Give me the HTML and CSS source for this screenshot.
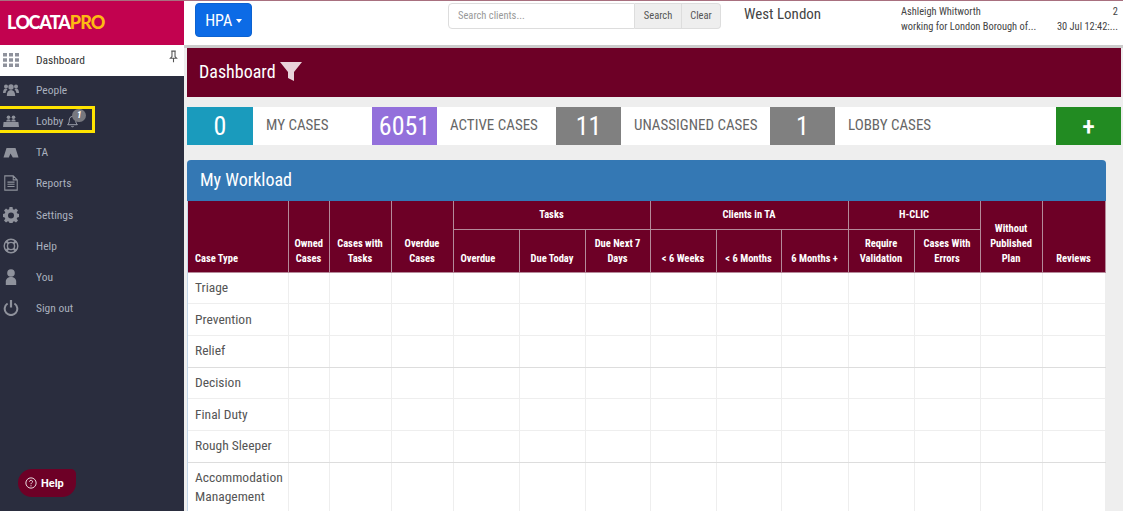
FILE: index.html
```html
<!DOCTYPE html>
<html lang="en">
<head>
<meta charset="utf-8">
<title>Locata Pro Dashboard</title>
<link rel="stylesheet" href="styles.css">
</head>
<body>
<aside class="sidebar">
  <div class="logo"><span class="logo-w">L<span class="logo-o">O</span>CATA</span><span class="logo-y">PRO</span></div>
  <nav class="nav">
    <a class="nav-item active">
      <svg class="ico" viewBox="0 0 16 14"><path d="M0 0h4v3.600H0zM6 0h4v3.600H6zM12 0h4v3.600h-4zM0 5.200h4v3.600H0zM6 5.200h4v3.600H6zM12 5.200h4v3.600h-4zM0 10.400h4V14H0zM6 10.400h4V14H6zM12 10.400h4V14h-4z"/></svg>
      <span>Dashboard</span>
      <svg class="pin" viewBox="0 0 10 14"><path d="M2.500 1h5M3.300 1v6L1.500 9h7L6.700 7V1M5 9v4.500" fill="none" stroke="currentColor" stroke-width="1.200"/></svg>
    </a>
    <a class="nav-item">
      <svg class="ico" viewBox="0 0 16 14"><circle cx="8" cy="4" r="2.700"/><circle cx="3" cy="3.600" r="2"/><circle cx="13" cy="3.600" r="2"/><path d="M3.800 13c0-4 1.500-6 4.200-6s4.200 2 4.200 6zM0 10c0-2.500 1-4.500 3-4.500l1.500.7C3.300 7.500 2.800 8.500 2.600 10zM16 10c0-2.500-1-4.500-3-4.500l-1.500.7c1.200 1.300 1.700 2.300 1.900 3.800z"/></svg>
      <span>People</span>
    </a>
    <a class="nav-item">
      <svg class="ico" viewBox="0 0 16 14"><circle cx="5.500" cy="3.200" r="1.800"/><circle cx="10.500" cy="3.200" r="1.800"/><path d="M3.300 7.500c0-1.500.9-2.300 2.200-2.300s2.200.8 2.200 2.300zM8.300 7.500c0-1.500.9-2.300 2.200-2.300s2.200.8 2.200 2.300zM.6 8h14.800l.6 5H0z"/></svg>
      <span>Lobby</span>
      <span class="bell-wrap">
        <svg class="bell" viewBox="0 0 12 14"><path d="M6 1.500c-2.300 0-3.500 1.700-3.500 4 0 2.500-.7 3.800-1.800 5h10.600c-1.100-1.200-1.800-2.500-1.800-5 0-2.300-1.200-4-3.500-4zM4.700 12c.2 1 2.400 1 2.600 0" fill="none" stroke="currentColor"/></svg>
        <span class="badge">1</span>
      </span>
    </a>
    <a class="nav-item">
      <svg class="ico" viewBox="0 0 16 14"><path d="M3.500 3h9L15.500 12.500H9.800L7.500 8.500 5.800 12.500H.5z"/></svg>
      <span>TA</span>
    </a>
    <a class="nav-item">
      <svg class="ico ico-tall" viewBox="0 0 16 18"><path d="M1 1h9.500L15 5.500V17H1zM10.500 1v4.500H15M4 8h8M4 10.500h8M4 13h8" fill="none" stroke="currentColor" stroke-width="1.200"/></svg>
      <span>Reports</span>
    </a>
    <a class="nav-item">
      <svg class="ico ico-tall" viewBox="0 0 16 16"><path fill-rule="evenodd" d="M6.500 0h3l.4 2.200 1.300.6L13 1.500l2 2-1.300 1.800.6 1.300 2.200.4v3l-2.200.4-.6 1.300 1.300 1.800-2 2-1.800-1.300-1.300.6-.4 2.200h-3l-.4-2.200-1.300-.6L3 15.500l-2-2 1.300-1.800-.6-1.300L-.5 10V7l2.200-.4.600-1.300L1 3.500l2-2 1.800 1.300 1.300-.6zM8 5.500a3 3 0 1 0 0 6 3 3 0 0 0 0-6z"/></svg>
      <span>Settings</span>
    </a>
    <a class="nav-item">
      <svg class="ico ico-tall" viewBox="0 0 16 16"><circle cx="8" cy="8" r="6.800" fill="none" stroke="currentColor" stroke-width="1.400"/><circle cx="8" cy="8" r="3.600" fill="none" stroke="currentColor" stroke-width="1.400"/><path d="M3 3l2.500 2.500M13 3l-2.500 2.500M3 13l2.500-2.500M13 13l-2.500-2.500" stroke="currentColor" stroke-width="2.400"/></svg>
      <span>Help</span>
    </a>
    <a class="nav-item">
      <svg class="ico ico-tall" viewBox="0 0 16 16"><circle cx="8" cy="4" r="3.800"/><path d="M2.800 16v-3.500C2.800 9.800 5 8 8 8s5.200 1.800 5.200 4.500V16z"/></svg>
      <span>You</span>
    </a>
    <a class="nav-item">
      <svg class="ico ico-tall" viewBox="0 0 16 16"><path d="M4.600 3.500a6.300 6.300 0 1 0 6.800 0" fill="none" stroke="currentColor" stroke-width="2"/><path d="M8 0v7.500" stroke="currentColor" stroke-width="2.200"/></svg>
      <span>Sign out</span>
    </a>
  </nav>
  <div class="lobby-box"></div>
  <button class="help-btn">
    <svg class="help-ico" viewBox="0 0 14 14"><circle cx="7" cy="7" r="6" fill="none" stroke="currentColor"/><path d="M5.200 5.500C5.300 3.300 8.800 3.400 8.800 5.400c0 1.400-1.800 1.400-1.800 3" fill="none" stroke="currentColor"/><circle cx="7" cy="10.300" r=".7" fill="currentColor"/></svg>
    Help
  </button>
</aside>
<div class="main">
  <header class="topbar">
    <button class="hpa">HPA <span class="caret"></span></button>
    <div class="search">
      <div class="search-input">Search clients...</div>
      <div class="search-btn">Search</div>
      <div class="search-btn last">Clear</div>
    </div>
    <div class="region">West London</div>
    <div class="user">
      <div class="user-row"><span>Ashleigh Whitworth</span><span>2</span></div>
      <div class="user-row"><span>working for London Borough of...</span><span>30 Jul 12:42:...</span></div>
    </div>
  </header>
  <div class="content">
    <div class="title-bar">
      <span>Dashboard</span>
      <svg class="funnel" viewBox="0 0 22 19"><path d="M0 0h22l-8 10v9l-6-3v-6z"/></svg>
    </div>
    <div class="stats">
      <div class="num teal">0</div><div class="label l1">MY CASES</div>
      <div class="num purple">6051</div><div class="label l2">ACTIVE CASES</div>
      <div class="num grey">11</div><div class="label l3">UNASSIGNED CASES</div>
      <div class="num grey">1</div><div class="label l4">LOBBY CASES</div>
      <div class="num green">+</div>
    </div>
    <section class="panel">
      <h2 class="panel-head">My Workload</h2>
      <table class="grid">
        <colgroup>
          <col class="c100"><col class="c41"><col class="c62"><col class="c62"><col class="c66"><col class="c66"><col class="c65"><col class="c66"><col class="c65"><col class="c67"><col class="c66"><col class="c66"><col class="c62"><col class="c63">
        </colgroup>
        <thead>
          <tr class="r1">
            <th rowspan="2" class="left">Case Type</th>
            <th rowspan="2">Owned Cases</th>
            <th rowspan="2">Cases with Tasks</th>
            <th rowspan="2">Overdue Cases</th>
            <th colspan="3" class="mid">Tasks</th>
            <th colspan="3" class="mid">Clients in TA</th>
            <th colspan="2" class="mid">H-CLIC</th>
            <th rowspan="2">Without Published Plan</th>
            <th rowspan="2">Reviews</th>
          </tr>
          <tr class="r2">
            <th class="left">Overdue</th><th>Due Today</th><th>Due Next 7 Days</th>
            <th>&lt; 6 Weeks</th><th>&lt; 6 Months</th><th>6 Months +</th>
            <th>Require Validation</th><th>Cases With Errors</th>
          </tr>
        </thead>
        <tbody>
          <tr><td>Triage</td><td></td><td></td><td></td><td></td><td></td><td></td><td></td><td></td><td></td><td></td><td></td><td></td><td></td></tr>
          <tr><td>Prevention</td><td></td><td></td><td></td><td></td><td></td><td></td><td></td><td></td><td></td><td></td><td></td><td></td><td></td></tr>
          <tr class="strong"><td>Relief</td><td></td><td></td><td></td><td></td><td></td><td></td><td></td><td></td><td></td><td></td><td></td><td></td><td></td></tr>
          <tr><td>Decision</td><td></td><td></td><td></td><td></td><td></td><td></td><td></td><td></td><td></td><td></td><td></td><td></td><td></td></tr>
          <tr><td>Final Duty</td><td></td><td></td><td></td><td></td><td></td><td></td><td></td><td></td><td></td><td></td><td></td><td></td><td></td></tr>
          <tr class="strong"><td>Rough Sleeper</td><td></td><td></td><td></td><td></td><td></td><td></td><td></td><td></td><td></td><td></td><td></td><td></td><td></td></tr>
          <tr class="tall"><td>Accommodation Management</td><td></td><td></td><td></td><td></td><td></td><td></td><td></td><td></td><td></td><td></td><td></td><td></td><td></td></tr>
        </tbody>
      </table>
    </section>
  </div>
</div>
</body>
</html>
```

FILE: styles.css
```css
* { box-sizing: border-box; }
html, body { height: 100%; margin: 0; }
body {
  display: flex;
  width: 1123px;
  height: 511px;
  overflow: hidden;
  font-family: Roboto, "Liberation Sans", sans-serif;
  font-stretch: 85%;
  color: #555;
  background: #eee;
  border-top: 1px solid #a8707f;
}
.sidebar {
  position: relative;
  flex: 0 0 184px;
  background: #2a2d3e;
  color: #a9adb8;
}
.logo {
  height: 44px;
  background: #c2024f;
  padding-left: 7px;
  font-family: Lato, sans-serif;
  font-weight: 900;
  font-size: 18px;
  line-height: 43px;
  letter-spacing: -1px;
}
.logo-w { color: #fff; }
.logo-o { letter-spacing: -1.600px; }
.logo-y { color: #fdb913; }
.nav-item {
  display: flex;
  align-items: center;
  height: 31.250px;
  padding: 0 0 4px 3px;
  font-size: 11.500px;
  color: #a9b0bd;
  white-space: nowrap;
}
.nav-item.active { background: #fff; color: #333; height: 31px; padding-bottom: 2px; }
.ico { width: 16px; height: 14px; margin-right: 17px; fill: #8f929c; color: #8f929c; flex: none; }
.ico-tall { height: 16px; }
.pin { width: 9px; height: 13px; margin-left: auto; margin-right: 6px; margin-top: -6px; color: #555; }
.bell-wrap { position: relative; display: block; width: 16px; height: 14px; margin-left: 2px; }
.bell { width: 11px; height: 13px; display: block; color: #a9adb8; margin-left: 2px; margin-top: 1px; }
.badge {
  position: absolute;
  left: 7px;
  top: -5px;
  width: 14px;
  height: 13px;
  border-radius: 7px;
  background: #77787f;
  color: #fff;
  font-size: 9px;
  font-weight: 700;
  font-style: italic;
  line-height: 13px;
  text-align: center;
}
.lobby-box {
  position: absolute;
  left: -3px;
  top: 105px;
  width: 98px;
  height: 27px;
  border: 3px solid #ffe400;
}
.help-btn {
  position: absolute;
  left: 18px;
  top: 468px;
  display: flex;
  align-items: center;
  gap: 4px;
  width: 58px;
  height: 28px;
  padding: 0 0 0 7px;
  border: 0;
  border-radius: 14px 5px 14px 14px;
  background: #6d0026;
  color: #fff;
  font-family: Roboto, sans-serif;
  font-stretch: 100%;
  font-size: 11px;
  font-weight: 700;
}
.help-ico { width: 12px; height: 12px; }
.main { flex: 1; min-width: 0; display: flex; flex-direction: column; }
.topbar {
  flex: 0 0 44px;
  display: flex;
  align-items: flex-start;
  padding: 2px 5px 0 11px;
  background: #fff;
}
.hpa {
  width: 57px;
  height: 34px;
  border: 1px solid #0c62d0;
  border-radius: 4px;
  background-color: #0c6be6;
  color: #fff;
  font-family: inherit;
  font-stretch: inherit;
  font-size: 16px;
  padding: 0;
}
.caret {
  display: inline-block;
  vertical-align: middle;
  border-top: 4px solid #fff;
  border-left: 3px solid transparent;
  border-right: 3px solid transparent;
}
.search { display: flex; margin-left: 196px; height: 26px; font-size: 10.500px; }
.search-input {
  width: 187px;
  padding: 0 9px;
  line-height: 24px;
  border: 1px solid #ddd;
  border-radius: 4px 0 0 4px;
  color: #999;
}
.search-btn {
  width: 47px;
  text-align: center;
  line-height: 24px;
  background: #eee;
  border: 1px solid #ddd;
  border-left: 0;
  color: #555;
}
.search-btn.last { width: 39px; border-radius: 0 4px 4px 0; }
.region { margin-left: 23px; margin-top: 2px; font-size: 15px; color: #444; white-space: nowrap; }
.user { width: 217px; margin-left: auto; margin-top: 1px; font-size: 10.400px; line-height: 15px; color: #444; }
.user-row { display: flex; justify-content: space-between; white-space: nowrap; }
.content { flex: 1; min-height: 0; padding: 3px 2px 0 3px; box-shadow: inset 0 3px 0 #ccc; }
.title-bar {
  display: flex;
  align-items: center;
  gap: 5px;
  height: 49px;
  padding: 0 0 2px 12px;
  background: #6d0026;
  color: #fff;
  font-size: 18px;
}
.funnel { width: 22px; height: 19px; fill: #e9d3da; margin-left: -1px; }
.stats { display: flex; height: 38px; margin-top: 10px; background: #fff; }
.num {
  flex: 0 0 65px;
  text-align: center;
  color: #fff;
  font-size: 26px;
  line-height: 39px;
}
.teal { flex-basis: 66px; background: #1a9bbd; }
.purple { background: #9370db; }
.grey { background: #808080; }
.green { background: #228b22; font-weight: 500; }
.label { padding-left: 13px; font-size: 15px; line-height: 36px; color: #666; white-space: nowrap; }
.l1 { flex: 0 0 119px; }
.l2 { flex: 0 0 119px; }
.l3 { flex: 0 0 149px; }
.l4 { flex: 0 0 221px; }
.panel {
  width: 919px;
  margin-top: 15px;
  background: #fff;
  border-radius: 4px 4px 0 0;
  border-left: 1px solid #c3d6e8;
  border-right: 1px solid #c3d6e8;
}
.panel-head {
  margin: 0 -1px;
  height: 41px;
  padding-left: 13px;
  background: #3478b4;
  color: #fff;
  font-size: 18px;
  font-weight: 400;
  line-height: 39px;
  border-radius: 4px 4px 0 0;
}
.grid { width: 917px; table-layout: fixed; border-collapse: collapse; }
.c100 { width: 100px; } .c41 { width: 41px; } .c62 { width: 62px; } .c63 { width: 63px; }
.c65 { width: 65px; } .c66 { width: 66px; } .c67 { width: 67px; }
th {
  background: #6d0026;
  color: #fff;
  border: 1px solid #b58a9a;
  border-top: 0;
  font-size: 10.500px;
  font-weight: 700;
  line-height: 15px;
  vertical-align: bottom;
  text-align: center;
  padding: 0 6px 6px;
}
th:first-child { padding-left: 7px; }
th.left { text-align: left; }
th.mid { vertical-align: middle; padding: 0 4px; }
.r1 { height: 28px; }
.r2 { height: 43px; }
thead tr:first-child th:first-child { border-left: 0; }
td {
  height: 31.700px;
  border: 1px solid #eee;
  padding: 0 6px 1px 7px;
  font-size: 13.500px;
  line-height: 19px;
  color: #555;
}
.strong td { border-bottom-color: #ddd; }
.tall td { height: 60px; vertical-align: top; padding-top: 5px; }
td:first-child { border-left: 0; }
```
